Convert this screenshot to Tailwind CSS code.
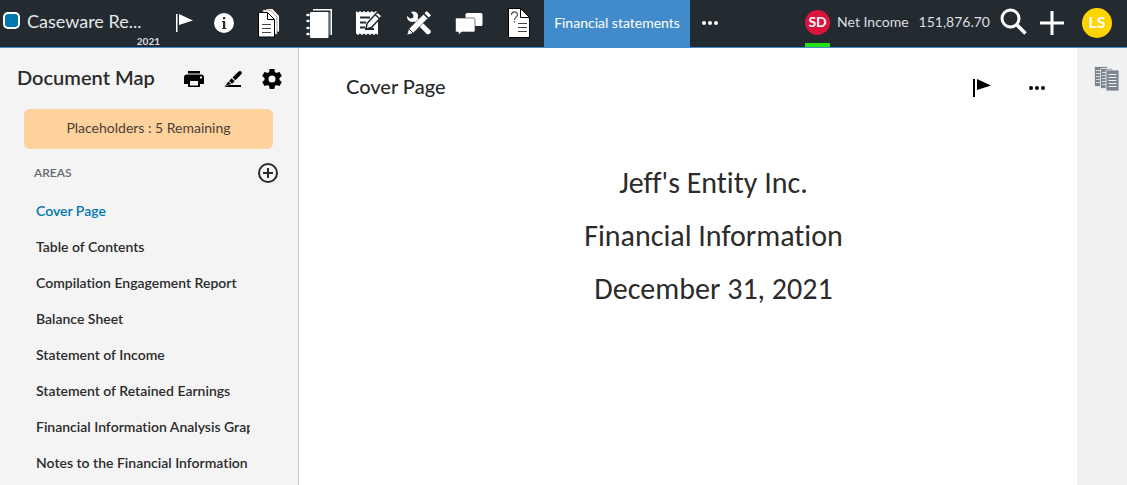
<!DOCTYPE html>
<html lang="en">
<head>
<meta charset="utf-8">
<meta name="viewport" content="width=device-width, initial-scale=1">
<title>Caseware - Financial statements</title>
<script src="https://cdn.jsdelivr.net/npm/@tailwindcss/browser@4"></script>
</head>
<body class="flex h-screen flex-col overflow-hidden bg-white font-['Lato','Carlito',sans-serif] text-[#2b2b2b] [font-variant-ligatures:none]">
<header class="flex h-12 shrink-0 border-b border-[#428bca] bg-[#232a30] text-white">
  <div class="flex w-41 shrink-0 flex-col pl-[3px]">
    <div class="flex h-9 items-center gap-[7px] pt-[6px]">
      <span class="size-[17px] shrink-0 rounded-[5px] border-2 border-white bg-[#0077ad]"></span>
      <span class="text-lg leading-6 text-[#e6e8ea]">Caseware Re...</span>
    </div>
    <span class="pr-1 text-right text-[10px] leading-3 font-bold text-[#dcdfe2]">2021</span>
  </div>
  <nav class="flex" aria-label="Engagement">
    <button class="flex w-10 items-center justify-center pb-[2px]" aria-label="Flag">
      <svg width="20" height="20" viewBox="0 0 20 20" fill="#fff"><path d="M2 1h1.500v18H2zM5 1l14 6.500L5 12z"/></svg>
    </button>
    <button class="flex w-10 items-center justify-center pb-[2px]" aria-label="Information">
      <svg width="20" height="20" viewBox="0 0 20 20"><circle cx="10" cy="10" r="10" fill="#fff"/><path fill="#232a30" d="M9 4h2.200v2.300H9zM9 8h2.200v8H9zM8 8h2v1H8zM8 15h4.200v1H8z"/></svg>
    </button>
    <button class="flex w-[50px] items-center justify-center pb-[2px]" aria-label="Documents">
      <svg width="24" height="30" viewBox="0 0 24 30" fill="#fff"><path stroke="#000" stroke-width=".7" d="M9 .5h6.500L22.500 8v16H9z"/><path stroke="#8f8580" stroke-width=".8" d="M6 2h7.500L20 9v17H6z"/><path stroke="#000" d="M1.500 4.500h8.700l7.300 7.300v17.200h-16z"/><path stroke="#000" d="M10.500 4.500v7h7z"/><path fill="none" stroke="#444" d="M5 16.500h9M5 20.500h9M5 24.500h9"/></svg>
    </button>
    <button class="flex w-[50px] items-center justify-center pb-[2px]" aria-label="Notebook">
      <svg width="28" height="30" viewBox="0 0 28 30" fill="#fff"><path d="M8 1h19v26h-1.500V2.500H8z"/><path fill="#9da1a5" d="M24.500 4h1v23h-1z"/><rect x="5" y="4" width="18.500" height="26" rx="1"/><path fill="none" stroke="#fff" stroke-width="2.500" stroke-linecap="round" d="M2.500 7h1M2.500 13h1M2.500 20h1M2.500 26h1"/></svg>
    </button>
    <button class="flex w-[50px] items-center justify-center pb-[2px]" aria-label="Checklist">
      <svg width="28" height="26" viewBox="0 0 28 26"><path fill="#fff" d="M1 1l2 1.500L5 1l2 1.500L9 1l2 1.500L13 1l2 1.500L17 1l2 1.500L21 1l2 1.500V25l-2-1.500L19 25l-2-1.500L15 25l-2-1.500L11 25l-2-1.500L7 25l-2-1.500L3 25l-2-1.500z"/><path stroke="#232a30" stroke-width="2" d="M5 7.500h10M5 12.500h6M5 17.500h5M10 19h9"/><path fill="#fff" stroke="#232a30" stroke-width="1.500" d="M12 13.500L22.500 2l4.500 4L16.500 17.500l-5.500 1.500z"/><path stroke="#232a30" stroke-width="1.500" d="M20 4.500l4.500 4"/></svg>
    </button>
    <button class="flex w-[50px] items-center justify-center pb-[2px]" aria-label="Tools">
      <svg width="26" height="26" viewBox="0 0 26 26" fill="#fff"><path d="M1 6l3 2.500 3-.5.500-3L5 2c3-1.500 6.500 0 7 3l-.3 3L24.500 20.500c1.500 2-1.800 5-3.800 3.500L8.500 11.500C4.500 13 .5 10 1 6z"/><path stroke="#232a30" stroke-width=".6" d="M1 25l1.700-6L17.500 4.200l4.300 4.300L7 23.300z"/><path d="M18.500 3.200L20.700 1 25 5.300l-2.200 2.200z"/><path stroke="#232a30" d="M3 19l4 4"/></svg>
    </button>
    <button class="flex w-[50px] items-center justify-center" aria-label="Conversations">
      <svg width="28" height="24" viewBox="0 0 28 24" fill="#fff"><path d="M12 1h14a1.500 1.500 0 0 1 1.500 1.500v10A1.500 1.500 0 0 1 26 14H10.500V2.500A1.500 1.500 0 0 1 12 1z"/><path stroke="#232a30" stroke-width=".6" d="M1.500 6h17A1.500 1.500 0 0 1 20 7.500v11a1.500 1.500 0 0 1-1.500 1.500H6.500l-3 3v-3h-2A1.500 1.500 0 0 1 .5 18.500v-11A1.500 1.500 0 0 1 1.500 6z"/></svg>
    </button>
    <button class="flex w-[50px] items-center justify-center pb-[2px]" aria-label="Queries">
      <svg width="22" height="30" viewBox="0 0 22 30" fill="#fff" stroke="#000"><path d="M.5.500h12l9 9v20H.500z"/><path d="M12.500.500v9h9z"/><path fill="none" stroke="#444" d="M10 15.500h9M10 19.500h9M10 23.500h9"/><path fill="none" stroke="#555" stroke-width="1.200" d="M3.500 7c0-4 6-4 6-.5 0 2.500-3 2.500-3 5.500M6.500 13v1.500"/></svg>
    </button>
    <a href="#" class="flex w-[146px] items-center justify-center bg-[#428bca] pb-[2px] text-sm text-white">Financial statements</a>
    <button class="flex w-10 items-center justify-center pb-[2px]" aria-label="More tabs">
      <svg width="18" height="4" viewBox="0 0 18 4" fill="#fff"><circle cx="3" cy="2" r="2"/><circle cx="9" cy="2" r="2"/><circle cx="15" cy="2" r="2"/></svg>
    </button>
  </nav>
  <div class="ml-auto flex pr-[15px]">
    <div class="flex w-[25px] flex-col justify-between pt-[10px]">
      <span class="flex size-[25px] items-center justify-center rounded-full bg-[#dc143c] pb-px text-sm leading-4 font-bold">SD</span>
      <span class="h-1 bg-[#25e012]"></span>
    </div>
    <div class="flex items-center gap-[10px] pb-1 pl-[7px] text-sm text-[#dcdfe2]"><span>Net Income</span><span>151,876.70</span></div>
    <button class="ml-[10px] flex w-7 items-center pb-1" aria-label="Search">
      <svg width="27" height="27" viewBox="0 0 27 27" fill="none" stroke="#fff"><circle cx="10.500" cy="10.500" r="8.500" stroke-width="3"/><path stroke-width="3.500" d="M17 17l8.500 8.500"/></svg>
    </button>
    <button class="ml-3 flex w-6 items-center pb-[2px]" aria-label="Add">
      <svg width="24" height="24" viewBox="0 0 24 24" fill="none" stroke="#fff" stroke-width="3"><path d="M12 0v24M0 12h24"/></svg>
    </button>
    <button class="mt-2 ml-[18px] flex size-[30px] items-center justify-center rounded-full bg-[#ffd500] pb-[2px] text-base font-bold" aria-label="Account LS">LS</button>
  </div>
</header>
<div class="flex min-h-0 flex-1">
  <aside class="w-[299px] shrink-0 overflow-hidden border-r border-[#c8c8c8] bg-[#f4f4f4]">
    <div class="flex h-[61px] items-center pr-4 pl-[17px]">
      <h1 class="flex-1 pb-1 text-xl font-semibold">Document Map</h1>
      <div class="flex items-center gap-5">
        <button aria-label="Print"><svg width="20" height="18" viewBox="0 0 20 18"><path d="M4 1h12v2.500H4zM3 4.500h14a3 3 0 0 1 3 3V14h-4v3H4v-3H0V7.500a3 3 0 0 1 3-3z"/><path fill="#f4f4f4" d="M6 11h8v4.500H6zM16 6.500h2v2h-2z"/></svg></button>
        <button aria-label="Edit"><svg width="18" height="18" viewBox="1 0 18 18"><path d="M9.500 7.500l6-6c2-1.800 4.500.7 2.800 2.700l-6 6zM8.500 8.300l3.200 3-2.700 2.400-2.800-2.800zM5.500 11.500l2.600 2.600L2 16l-.8 1zM1 17l5-2h12v2z"/></svg></button>
        <button aria-label="Settings"><svg width="20" height="20" viewBox="2 2 20 20"><path d="M19.430 12.980c.04-.32.070-.64.070-.98s-.03-.66-.07-.98l2.110-1.650c.19-.15.240-.42.120-.64l-2-3.460c-.12-.22-.39-.3-.61-.22l-2.490 1c-.52-.4-1.080-.73-1.690-.98l-.38-2.650A.488.488 0 0 0 14 2h-4c-.25 0-.46.180-.49.420l-.38 2.650c-.61.250-1.170.590-1.690.980l-2.490-1c-.23-.09-.49 0-.61.220l-2 3.460c-.13.220-.07.490.12.640l2.110 1.650c-.04.320-.07.650-.07.980s.03.660.070.980l-2.110 1.650c-.19.150-.24.420-.12.640l2 3.460c.12.220.39.300.61.220l2.490-1c.52.400 1.080.730 1.690.980l.38 2.650c.03.240.240.420.490.420h4c.25 0 .46-.18.490-.42l.38-2.650c.61-.25 1.170-.59 1.690-.98l2.490 1c.23.090.49 0 .61-.22l2-3.460c.12-.22.070-.49-.12-.64l-2.110-1.650zM12 15.500a3.500 3.500 0 1 1 0-7 3.500 3.500 0 0 1 0 7z"/></svg></button>
      </div>
    </div>
    <button class="mr-[25px] ml-6 flex h-10 w-[249px] items-center justify-center rounded-md bg-[#fed29c] pb-[2px] text-sm text-[#4a4038]">Placeholders : 5 Remaining</button>
    <div class="flex h-11 items-center justify-between pt-1 pr-5 pl-[34px]">
      <h2 class="flex h-6 items-center text-xs font-semibold text-[#65686b]">AREAS</h2>
      <button aria-label="Add area"><svg width="20" height="20" viewBox="0 0 20 20" fill="none" stroke="#2b2b2b" stroke-width="2"><circle cx="10" cy="10" r="9"/><path d="M10 5v10M5 10h10"/></svg></button>
    </div>
    <nav class="flex flex-col pr-12 pl-9 text-sm font-semibold" aria-label="Areas">
      <a href="#" class="flex h-9 items-center overflow-hidden whitespace-nowrap text-[#0077ad]">Cover Page</a>
      <a href="#" class="flex h-9 items-center overflow-hidden whitespace-nowrap">Table of Contents</a>
      <a href="#" class="flex h-9 items-center overflow-hidden whitespace-nowrap">Compilation Engagement Report</a>
      <a href="#" class="flex h-9 items-center overflow-hidden whitespace-nowrap">Balance Sheet</a>
      <a href="#" class="flex h-9 items-center overflow-hidden whitespace-nowrap">Statement of Income</a>
      <a href="#" class="flex h-9 items-center overflow-hidden whitespace-nowrap">Statement of Retained Earnings</a>
      <a href="#" class="flex h-9 items-center overflow-hidden whitespace-nowrap">Financial Information Analysis Graphs</a>
      <a href="#" class="flex h-9 items-center overflow-hidden whitespace-nowrap">Notes to the Financial Information</a>
    </nav>
  </aside>
  <main class="flex-1 pt-5">
    <div class="flex h-10 items-center justify-between pr-[31px] pl-[47px]">
      <h2 class="pb-1 text-xl font-medium">Cover Page</h2>
      <div class="flex items-center gap-9">
        <button aria-label="Flag page"><svg width="20" height="20" viewBox="0 0 20 20"><path d="M1 1h2v18H1zM5 1l14 6.500L5 12z"/></svg></button>
        <button aria-label="More actions"><svg width="18" height="4" viewBox="0 0 18 4"><circle cx="3" cy="2" r="2"/><circle cx="9" cy="2" r="2"/><circle cx="15" cy="2" r="2"/></svg></button>
      </div>
    </div>
    <div class="mt-12 pl-[51px] text-center font-['Carlito','Lato',sans-serif] text-[30px] leading-[53px]">
      <p>Jeff's Entity Inc.</p>
      <p>Financial Information</p>
      <p>December 31, 2021</p>
    </div>
  </main>
  <aside class="flex w-[50px] shrink-0 items-start justify-center bg-[#f0f1f3] pt-[18px] pl-[9px]">
    <button aria-label="Documents panel"><svg width="25" height="25" viewBox="0 0 25 25" fill="#7d858f" stroke="#f0f1f3" stroke-width=".8"><rect x=".5" y=".5" width="13" height="20" rx="1"/><path stroke="#f0f1f3" d="M2 4.500h4M2 7.500h4M2 10.500h4M2 13.500h4M2 16.500h4"/><rect x="6.500" y="2.500" width="12" height="20" rx="1"/><path d="M8 6.500h4M8 9.500h4M8 12.500h4M8 15.500h4M8 18.500h4"/><rect x="12" y="4" width="13" height="21" rx="1"/><path stroke-width="1" d="M14.500 8.500h8M14.500 11.500h8M14.500 14.500h8M14.500 17.500h8M14.500 20.500h8"/></svg></button>
  </aside>
</div>
</body>
</html>
